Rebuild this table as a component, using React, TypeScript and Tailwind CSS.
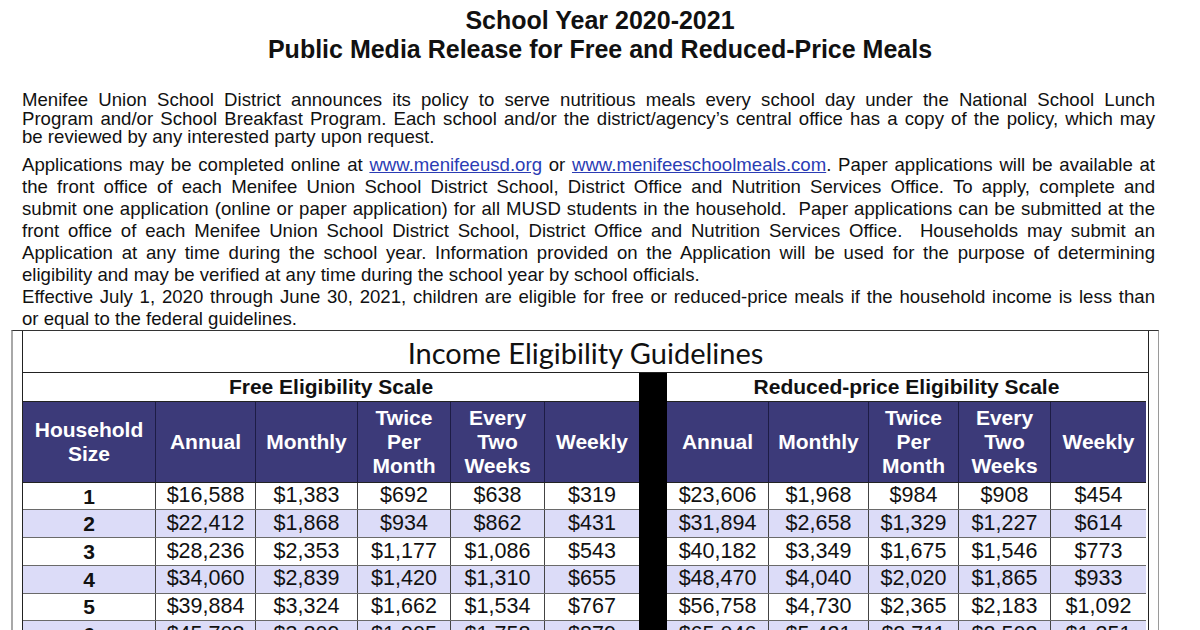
import React from "react";

const freeRows = [
  ["1", "$16,588", "$1,383", "$692", "$638", "$319"],
  ["2", "$22,412", "$1,868", "$934", "$862", "$431"],
  ["3", "$28,236", "$2,353", "$1,177", "$1,086", "$543"],
  ["4", "$34,060", "$2,839", "$1,420", "$1,310", "$655"],
  ["5", "$39,884", "$3,324", "$1,662", "$1,534", "$767"],
  ["6", "$45,708", "$3,809", "$1,905", "$1,758", "$879"],
];
const redRows = [
  ["$23,606", "$1,968", "$984", "$908", "$454"],
  ["$31,894", "$2,658", "$1,329", "$1,227", "$614"],
  ["$40,182", "$3,349", "$1,675", "$1,546", "$773"],
  ["$48,470", "$4,040", "$2,020", "$1,865", "$933"],
  ["$56,758", "$4,730", "$2,365", "$2,183", "$1,092"],
  ["$65,046", "$5,421", "$2,711", "$2,502", "$1,251"],
];

const J = "text-justify [text-align-last:justify]";

function HeadCell({ lines, last }: { lines: string[]; last?: boolean }) {
  return (
    <div
      className={`flex flex-col items-center justify-center text-white font-bold text-[21px] leading-[24px] ${
        last ? "" : "border-r border-[#1d1c45]"
      }`}
    >
      {lines.map((l) => (
        <span key={l}>{l}</span>
      ))}
    </div>
  );
}

export default function App() {
  return (
    <div className="w-[1200px] h-[630px] overflow-hidden bg-white text-[#111] font-['Liberation_Sans',Arial,sans-serif]">
      <div className="pt-[6px] text-center font-bold text-[25px] leading-[29px]">
        <div>School Year 2020-2021</div>
        <div>Public Media Release for Free and Reduced-Price Meals</div>
      </div>

      <div className="pl-[22px] pr-[45px] text-[18.6px]">
        <div className="mt-[27px] leading-[18.6px]">
          <div className={J}>
            Menifee Union School District announces its policy to serve nutritious meals every school day under the National School Lunch
          </div>
          <div className={J}>
            Program and/or School Breakfast Program. Each school and/or the district/agency’s central office has a copy of the policy, which may
          </div>
          <div>be reviewed by any interested party upon request.</div>
        </div>
        <div className="mt-[7px] leading-[22px]">
          <div className={J}>
            Applications may be completed online at{" "}
            <span className="text-[#2b3cb4] underline">www.menifeeusd.org</span> or{" "}
            <span className="text-[#2b3cb4] underline">www.menifeeschoolmeals.com</span>. Paper applications will be available at
          </div>
          <div className={J}>
            the front office of each Menifee Union School District School, District Office and Nutrition Services Office. To apply, complete and
          </div>
          <div className={J}>
            submit one application (online or paper application) for all MUSD students in the household.{"\u00a0"} Paper applications can be submitted at the
          </div>
          <div className={J}>
            front office of each Menifee Union School District School, District Office and Nutrition Services Office.{"\u00a0"} Households may submit an
          </div>
          <div className={J}>
            Application at any time during the school year. Information provided on the Application will be used for the purpose of determining
          </div>
          <div>eligibility and may be verified at any time during the school year by school officials.</div>
          <div className={J}>
            Effective July 1, 2020 through June 30, 2021, children are eligible for free or reduced-price meals if the household income is less than
          </div>
          <div>or equal to the federal guidelines.</div>
        </div>
      </div>

      <div className="ml-[11px] w-[1148px] border-t-[1.5px] border-t-[#333] border-l-2 border-l-[#a8a8a8] border-r border-r-[#9a9a9a] px-[9px]">
        <div className="border-x border-[#222]">
          <div className="h-[42px] flex items-center justify-center border-b border-[#222] font-['Lato','Open_Sans',sans-serif] text-[29px] text-[#111] pt-[3px]">
            Income Eligibility Guidelines
          </div>
          <div className="flex">
            {/* Free section */}
            <div className="w-[616px]">
              <div className="h-[28px] flex items-center justify-center font-bold text-[21px]">
                Free Eligibility Scale
              </div>
              <div className="h-[82px] grid grid-cols-[133px_100px_102px_93px_94px_94px] bg-[#3c3a79] border-y border-[#222]">
                <HeadCell lines={["Household", "Size"]} />
                <HeadCell lines={["Annual"]} />
                <HeadCell lines={["Monthly"]} />
                <HeadCell lines={["Twice", "Per", "Month"]} />
                <HeadCell lines={["Every", "Two", "Weeks"]} />
                <HeadCell lines={["Weekly"]} last />
              </div>
              {freeRows.map((r, i) => (
                <div
                  key={i}
                  className={`h-[27.7px] grid grid-cols-[133px_100px_102px_93px_94px_94px] border-b border-[#6a6a6a] text-[21.5px] leading-none ${
                    i % 2 === 1 ? "bg-[#dcdcf8]" : "bg-white"
                  }`}
                >
                  {r.map((c, j) => (
                    <div
                      key={j}
                      className={`flex items-center justify-center ${j === 0 ? "font-bold text-[21px]" : ""} ${
                        j < 5 ? "border-r border-[#444]" : ""
                      }`}
                    >
                      {c}
                    </div>
                  ))}
                </div>
              ))}
            </div>

            {/* Divider */}
            <div className="w-[28px] bg-black" />

            {/* Reduced section */}
            <div className="w-[479px]">
              <div className="h-[28px] flex items-center justify-center font-bold text-[21px]">
                Reduced-price Eligibility Scale
              </div>
              <div className="h-[82px] grid grid-cols-[102px_100px_90px_92px_95px] bg-[#3c3a79] border-y border-[#222]">
                <HeadCell lines={["Annual"]} />
                <HeadCell lines={["Monthly"]} />
                <HeadCell lines={["Twice", "Per", "Month"]} />
                <HeadCell lines={["Every", "Two", "Weeks"]} />
                <HeadCell lines={["Weekly"]} last />
              </div>
              {redRows.map((r, i) => (
                <div
                  key={i}
                  className={`h-[27.7px] grid grid-cols-[102px_100px_90px_92px_95px] border-b border-[#6a6a6a] text-[21.5px] leading-none ${
                    i % 2 === 1 ? "bg-[#dcdcf8]" : "bg-white"
                  }`}
                >
                  {r.map((c, j) => (
                    <div
                      key={j}
                      className={`flex items-center justify-center ${j < 4 ? "border-r border-[#444]" : ""}`}
                    >
                      {c}
                    </div>
                  ))}
                </div>
              ))}
            </div>
          </div>
        </div>
      </div>
    </div>
  );
}
